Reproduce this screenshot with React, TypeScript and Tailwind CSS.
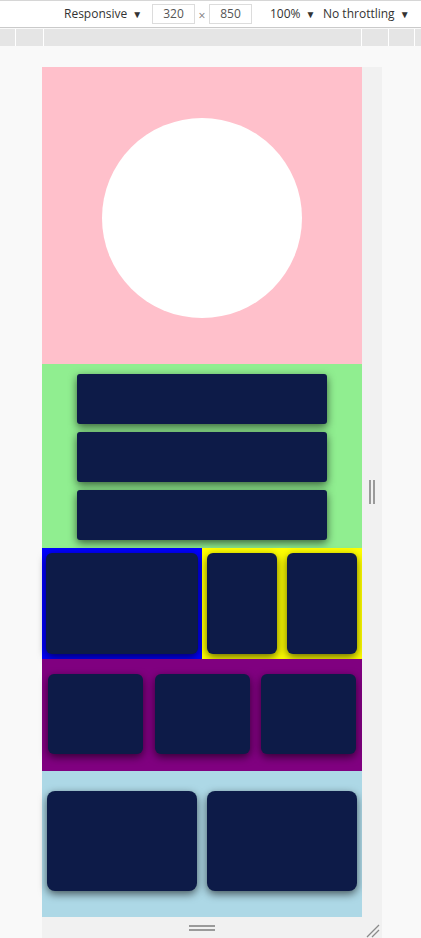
const card = "bg-[#0d1b48] shadow-[0_3px_9px_rgba(0,0,0,0.6)]";

function Toolbar() {
  return (
    <div className="h-[28px] shrink-0 bg-white border-t border-[#d6d6d6] border-b border-b-[#cacaca] flex items-center text-[12px] text-[#333] font-['Open_Sans',sans-serif]">
      <div className="w-[64px]" />
      <div className="w-[88px] flex items-center gap-[5px]">
        <span>Responsive</span>
        <span className="text-[10px]">▼</span>
      </div>
      <div className="w-[43px] h-[20px] border border-[#dcdcdc] flex items-center justify-center text-[#555]">320</div>
      <div className="w-[14px] text-center text-[#777] text-[12px] mt-[3px]">×</div>
      <div className="w-[43px] h-[20px] border border-[#dcdcdc] flex items-center justify-center text-[#555]">850</div>
      <div className="w-[18px]" />
      <div className="w-[53px] flex items-center gap-[5px]">
        <span>100%</span>
        <span className="text-[10px]">▼</span>
      </div>
      <div className="flex items-center gap-[5px]">
        <span>No throttling</span>
        <span className="text-[10px]">▼</span>
      </div>
    </div>
  );
}

function Ruler() {
  return (
    <div className="h-[17px] shrink-0 mt-[1px] bg-[#e5e5e5] flex">
      <div className="w-[16px] border-r border-white" />
      <div className="w-[28px] border-r border-white" />
      <div className="w-[318px] border-r border-white" />
      <div className="w-[27px] border-r border-white" />
      <div className="w-[26px] border-r border-white" />
      <div className="flex-1" />
    </div>
  );
}

function Device() {
  return (
    <div className="w-[320px] h-[850px] flex flex-col">
      <div className="h-[297px] bg-[#ffc0cb] flex justify-center pt-[51px]">
        <div className="w-[200px] h-[200px] rounded-full bg-white" />
      </div>
      <div className="h-[184px] bg-[#90ee90] flex flex-col items-center gap-[8px] pt-[10px]">
        <div className={`w-[250px] h-[50px] rounded-[3px] ${card}`} />
        <div className={`w-[250px] h-[50px] rounded-[3px] ${card}`} />
        <div className={`w-[250px] h-[50px] rounded-[3px] ${card}`} />
      </div>
      <div className="h-[111px] flex">
        <div className="w-[160px] bg-[#0000ff] py-[5px] px-[4px]">
          <div className={`w-full h-full rounded-[6px] ${card}`} />
        </div>
        <div className="w-[160px] bg-[#ffff00] flex justify-between px-[5px] py-[5px]">
          <div className={`w-[70px] h-full rounded-[6px] ${card}`} />
          <div className={`w-[70px] h-full rounded-[6px] ${card}`} />
        </div>
      </div>
      <div className="h-[112px] bg-[#800080] flex justify-between items-start pt-[15px] px-[6px]">
        <div className={`w-[95px] h-[80px] rounded-[6px] ${card}`} />
        <div className={`w-[95px] h-[80px] rounded-[6px] ${card}`} />
        <div className={`w-[95px] h-[80px] rounded-[6px] ${card}`} />
      </div>
      <div className="flex-1 bg-[#add8e6] flex justify-between items-start pt-[20px] px-[5px]">
        <div className={`w-[150px] h-[100px] rounded-[8px] ${card}`} />
        <div className={`w-[150px] h-[100px] rounded-[8px] ${card}`} />
      </div>
    </div>
  );
}

export default function App() {
  return (
    <div className="w-[421px] h-[938px] bg-[#f9f9f9] flex flex-col overflow-hidden">
      <Toolbar />
      <Ruler />
      <div className="h-[21px] shrink-0" />
      <div className="flex pl-[42px] shrink-0">
        <Device />
        <div className="w-[20px] bg-[#f1f1f1] flex items-center justify-center">
          <div className="flex gap-[2px] h-[24px]">
            <div className="w-[2px] bg-[#9a9a9a]" />
            <div className="w-[2px] bg-[#9a9a9a]" />
          </div>
        </div>
      </div>
      <div className="flex pl-[42px] shrink-0">
        <div className="w-[340px] h-[21px] bg-[#f1f1f1] flex items-center">
          <div className="w-[320px] flex flex-col items-center gap-[2px]">
            <div className="w-[26px] h-[2px] bg-[#9a9a9a]" />
            <div className="w-[26px] h-[2px] bg-[#9a9a9a]" />
          </div>
          <svg width="14" height="14" viewBox="0 0 14 14" className="ml-[4px] mt-[6px]">
            <path d="M1 13 L13 1 M6 13 L13 6" stroke="#8a8a8a" strokeWidth="1.3" />
          </svg>
        </div>
      </div>
    </div>
  );
}
